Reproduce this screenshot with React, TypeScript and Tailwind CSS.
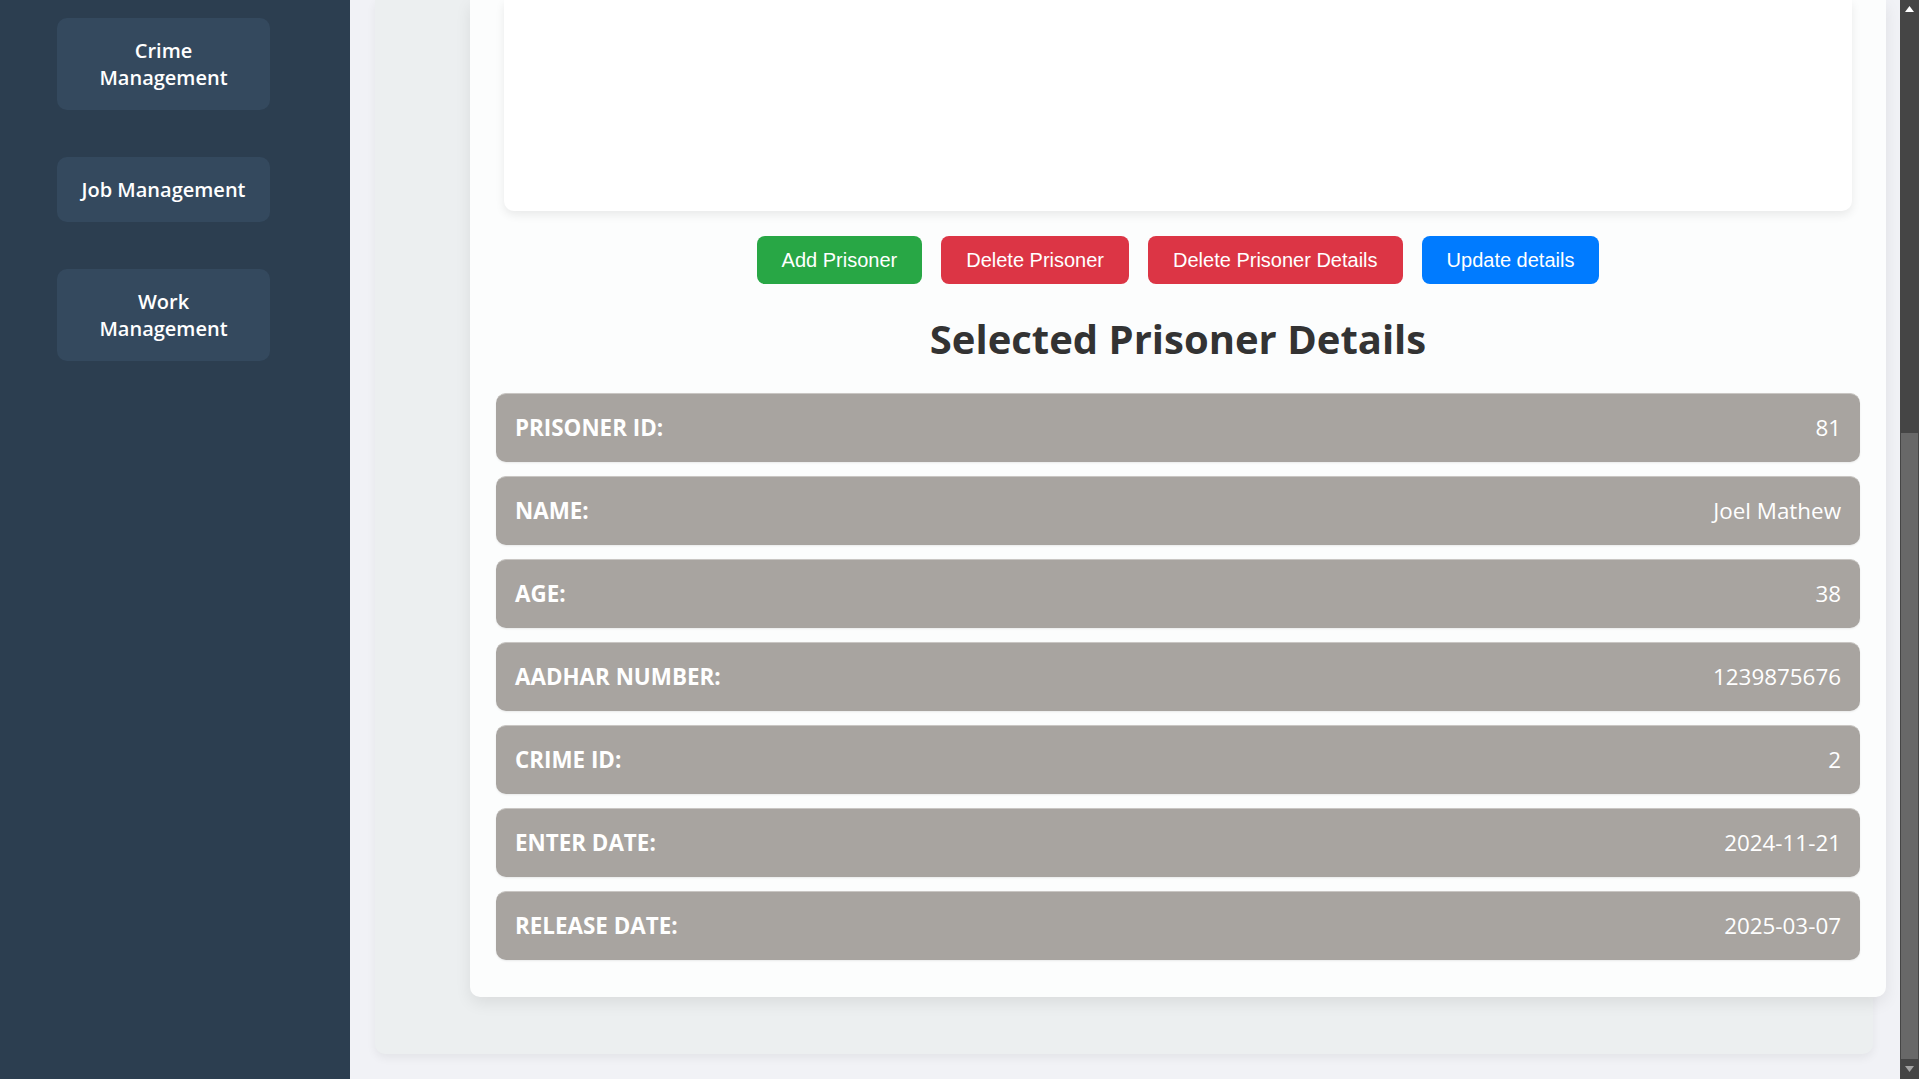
const sideLinks = ["Crime Management", "Job Management", "Work Management"];

const details = [
  { label: "PRISONER ID:", value: "81" },
  { label: "NAME:", value: "Joel Mathew" },
  { label: "AGE:", value: "38" },
  { label: "AADHAR NUMBER:", value: "1239875676" },
  { label: "CRIME ID:", value: "2" },
  { label: "ENTER DATE:", value: "2024-11-21" },
  { label: "RELEASE DATE:", value: "2025-03-07" },
];

function Sidebar() {
  return (
    <aside className="w-[350px] shrink-0 bg-[#2c3e50] pt-[18px] pl-[57px] flex flex-col gap-[47px]">
      {sideLinks.map((l) => (
        <button
          key={l}
          className="w-[213px] rounded-[10px] bg-[#34495e] px-[20px] py-[19px] text-[20px] leading-[27px] font-semibold text-white text-center"
        >
          {l}
        </button>
      ))}
    </aside>
  );
}

function Scrollbar() {
  return (
    <div className="w-[19px] shrink-0 bg-[#454545] flex flex-col items-center">
      <div className="h-[17px] w-full flex items-center justify-center">
        <svg width="9" height="6" viewBox="0 0 9 6">
          <path d="M4.5 0 L9 6 L0 6 Z" fill="#ffffff" />
        </svg>
      </div>
      <div className="h-[416px]" />
      <div className="w-[17px] h-[626px] bg-[#686868]" />
      <div className="flex-1 w-full flex items-center justify-center">
        <svg width="9" height="6" viewBox="0 0 9 6">
          <path d="M0 0 L9 0 L4.5 6 Z" fill="#a3a3a3" />
        </svg>
      </div>
    </div>
  );
}

function ActionButtons() {
  const btn =
    "h-[48px] rounded-[8px] px-[25px] text-[20px] text-white font-['Liberation_Sans',Arial,sans-serif]";
  return (
    <div className="mt-[25px] flex justify-center gap-[19px]">
      <button className={`${btn} bg-[#28a745]`}>Add Prisoner</button>
      <button className={`${btn} bg-[#dc3545]`}>Delete Prisoner</button>
      <button className={`${btn} bg-[#dc3545]`}>Delete Prisoner Details</button>
      <button className={`${btn} bg-[#007bff]`}>Update details</button>
    </div>
  );
}

export default function App() {
  return (
    <div className="flex h-screen w-full overflow-hidden font-['Open_Sans',sans-serif]">
      <Sidebar />
      <main className="flex-1 bg-[#f1f2f6] overflow-hidden">
        <div className="ml-[25px] w-[1498px] rounded-b-[10px] bg-[#eceff0] pb-[57px] shadow-[0_4px_10px_rgba(0,0,0,0.06)]">
          <div className="ml-[95px] w-[1416px] rounded-b-[10px] bg-[#fcfdfd] pb-[37px] shadow-[0_6px_16px_rgba(0,0,0,0.08)]">
            {/* chart area, top scrolled away */}
            <div className="mx-[34px] h-[211px] rounded-b-[10px] bg-white shadow-[0_4px_10px_rgba(0,0,0,0.08)]" />

            <ActionButtons />

            <h2 className="mt-[28px] text-center text-[40px] leading-[54px] font-bold text-[#333333]">
              Selected Prisoner Details
            </h2>

            <div className="mt-[27px] mx-[26px] flex flex-col gap-[14px]">
              {details.map((d) => (
                <div
                  key={d.label}
                  className="h-[69px] rounded-[10px] bg-[#a8a4a0] border-t border-[#c9c6c3] pl-[19px] pr-[19px] flex items-center justify-between text-[22.4px] text-white shadow-[0_1px_2px_rgba(0,0,0,0.08)]"
                >
                  <span className="font-bold">{d.label}</span>
                  <span>{d.value}</span>
                </div>
              ))}
            </div>
          </div>
        </div>
      </main>
      <Scrollbar />
    </div>
  );
}
